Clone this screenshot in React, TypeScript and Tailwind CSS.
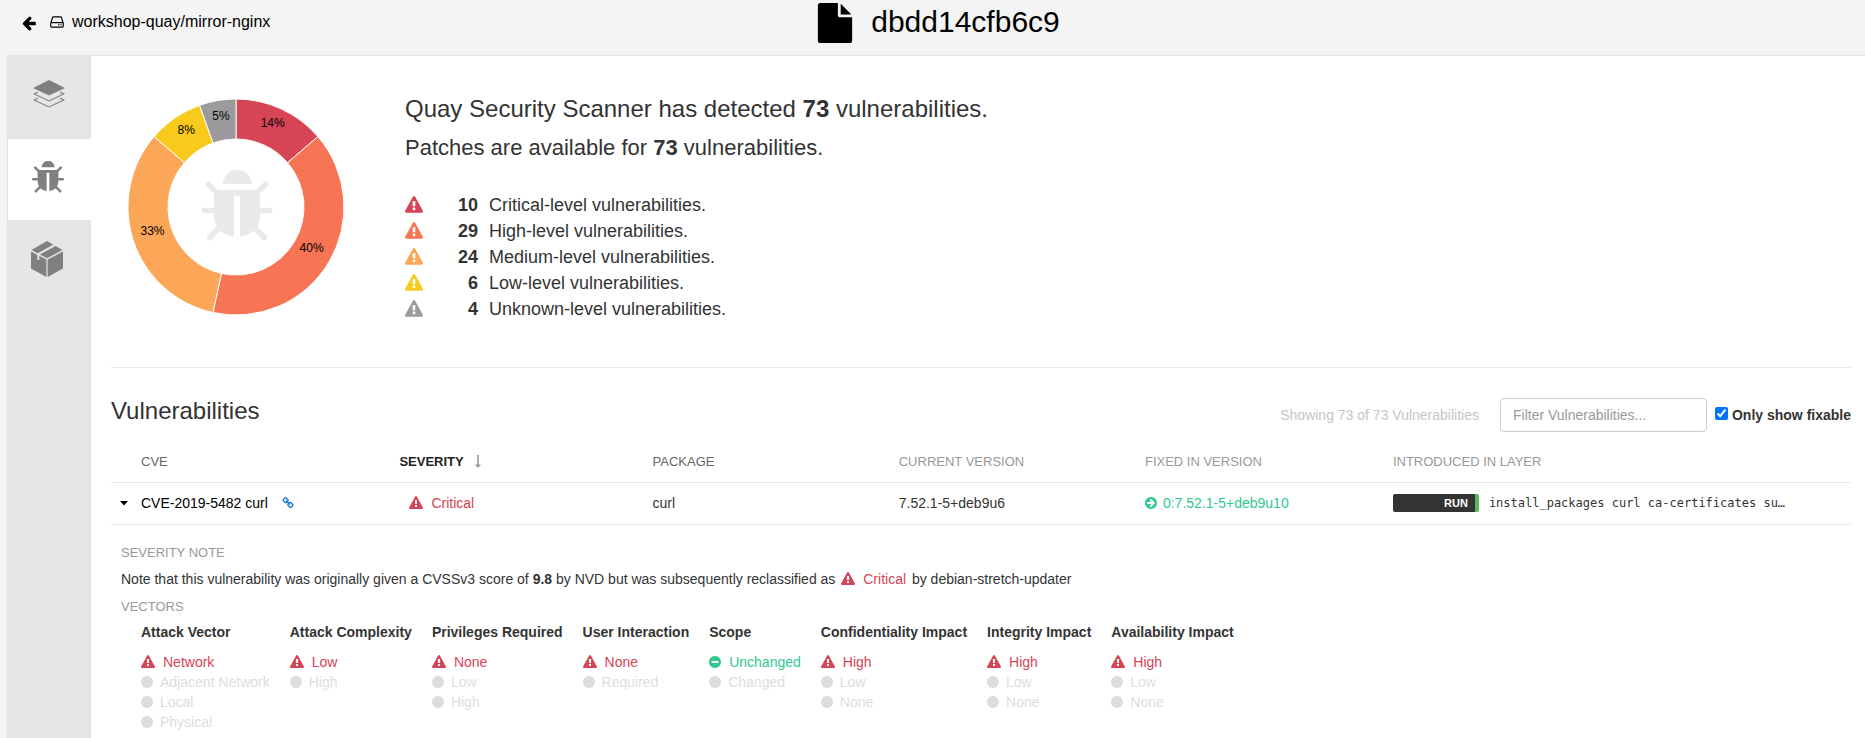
import { useId, useState, type ReactNode } from 'react';

const P = {
  warn: 'M1024 1375v-190q0-14-9.500-23.500t-22.500-9.500h-192q-13 0-22.500 9.500t-9.500 23.500v190q0 14 9.500 23.500t22.500 9.500h192q13 0 22.500-9.500t9.500-23.500zm-2-374l18-459q0-12-10-19-13-11-24-11h-220q-11 0-24 11-10 7-10 21l17 457q0 10 10 16.500t24 6.500h185q14 0 23.500-6.500t10.500-16.500zm-14-934l768 1408q35 63-2 126-17 29-46.500 46t-63.500 17h-1536q-34 0-63.500-17t-46.500-46q-37-63-2-126l768-1408q17-31 47-49t65-18 65 18 47 49z',
  disk: 'M1168 1216q0 33-23.500 56.500t-56.500 23.500-56.500-23.500-23.500-56.500 23.500-56.500 56.500-23.500 56.500 23.500 23.500 56.500zm256 0q0 33-23.500 56.500t-56.500 23.500-56.500-23.500-23.500-56.500 23.500-56.500 56.500-23.500 56.500 23.500 23.500 56.500zm112 160v-320q0-13-9.500-22.500t-22.500-9.500h-1216q-13 0-22.500 9.500t-9.500 22.500v320q0 13 9.500 22.500t22.500 9.500h1216q13 0 22.500-9.500t9.500-22.500zm-1230-480h1180l-157-482q-4-13-16-21.500t-26-8.500h-782q-14 0-26 8.500t-16 21.500zm1358 160v320q0 66-47 113t-113 47h-1216q-66 0-113-47t-47-113v-320q0-25 16-75l197-606q17-53 63-86t101-33h782q55 0 101 33t63 86l197 606q16 50 16 75z',
  back: 'M1664 896v128q0 53-32.500 90.500t-84.500 37.500h-704l293 294q38 36 38 90t-38 90l-75 76q-37 37-90 37-52 0-91-37l-651-652q-37-37-37-90 0-52 37-91l651-650q38-38 91-38 52 0 90 38l75 74q38 38 38 91t-38 91l-293 293h704q52 0 84.500 37.500t32.500 90.500z',
  file: 'M1152 512v-472q22 14 36 28l408 408q14 14 28 36h-472zm-128 32q0 40 28 68t68 28h544v1056q0 40-28 68t-68 28h-1344q-40 0-68-28t-28-68v-1600q0-40 28-68t68-28h800v544z',
  minus: 'M1344 960v-128q0-26-19-45t-45-19h-768q-26 0-45 19t-19 45v128q0 26 19 45t45 19h768q26 0 45-19t19-45zm320-64q0 209-103 385.500t-279.500 279.500-385.500 103-385.500-103-279.500-279.500-103-385.500 103-385.500 279.500-279.500 385.500-103 385.500 103 279.500 279.500 103 385.500z',
  next: 'M1413 896q0-27-18-45l-91-91-362-362q-18-18-45-18t-45 18l-91 91q-18 18-18 45t18 45l189 189h-502q-26 0-45 19t-19 45v128q0 26 19 45t45 19h502l-189 189q-19 19-19 45t19 45l91 91q18 18 45 18t45-18l362-362 91-91q18-18 18-45zm251 0q0 209-103 385.500t-279.500 279.500-385.500 103-385.500-103-279.500-279.500-103-385.500 103-385.500 279.500-279.500 385.500-103 385.500 103 279.500 279.500 103 385.500z',
  link: 'M1520 1216q0-40-28-68l-208-208q-28-28-68-28-42 0-72 32 3 3 19 18.500t21.500 21.500 15 19 13 25.500 3.500 27.500q0 40-28 68t-68 28q-15 0-27.500-3.500t-25.500-13-19-15-21.500-21.500-18.500-19q-33 31-33 73 0 40 28 68l206 207q27 27 68 27 40 0 68-26l147-146q28-28 28-67zm-703-705q0-40-28-68l-206-207q-28-28-68-28-39 0-68 27l-147 146q-28 28-28 67 0 40 28 68l208 208q27 27 68 27 42 0 72-31-3-3-19-18.500t-21.500-21.500-15-19-13-25.500-3.500-27.500q0-40 28-68t68-28q15 0 27.500 3.500t25.500 13 19 15 21.500 21.500 18.500 19q33-31 33-73zm895 705q0 120-85 203l-147 146q-83 83-203 83-121 0-204-85l-206-207q-83-83-83-203 0-123 88-209l-88-88q-86 88-208 88-120 0-204-84l-208-208q-84-84-84-204t85-203l147-146q83-83 203-83 121 0 204 85l206 207q83 83 83 203 0 123-88 209l88 88q86-88 208-88 120 0 204 84l208 208q84 84 84 204z',
  dot: 'M1664 896q0 209-103 385.500t-279.500 279.500-385.500 103-385.500-103-279.500-279.500-103-385.500 103-385.500 279.500-279.500 385.500-103 385.500 103 279.500 279.500 103 385.500z',
};

function Icon({ name, className, box = '0 0 1792 1792' }: { name: keyof typeof P; className: string; box?: string }) {
  return (
    <svg viewBox={box} className={`shrink-0 ${className}`} fill="currentColor" aria-hidden="true">
      <path d={P[name]} />
    </svg>
  );
}

function Bug() {
  return (
    <>
      <path d="M21.500 14a14.200 14.200 0 0 1 28.600 0z" />
      <path d="M12.500 20h46v25c0 12-8 20.500-20 21.300V26h-6v40.300c-12-.8-20-9.300-20-21.300z" />
      <path
        d="M7 14.500l8.500 8.500M64 14.500L55.500 23M2.800 40.500H13M68.200 40.500H58M8.300 67.500L18 57.500M62.700 67.500L53 57.500"
        fill="none"
        stroke="currentColor"
        strokeWidth="5.600"
        strokeLinecap="round"
      />
    </>
  );
}

const LEVELS = [
  { name: 'Critical', count: 10, fill: '#d64456', text: 'text-[#d64456]', share: '14%' },
  { name: 'High', count: 29, fill: '#f77454', text: 'text-[#f77454]', share: '40%' },
  { name: 'Medium', count: 24, fill: '#fca657', text: 'text-[#fca657]', share: '33%' },
  { name: 'Low', count: 6, fill: '#f8ca1c', text: 'text-[#f8ca1c]', share: '8%' },
  { name: 'Unknown', count: 4, fill: '#9b9b9b', text: 'text-[#9b9b9b]', share: '5%' },
];
const TOTAL = 73;

function Donut() {
  const R = 108;
  const r = 68;
  let seen = 0;
  const at = (turn: number, radius: number) =>
    `${(110 + radius * Math.sin(turn * 2 * Math.PI)).toFixed(2)} ${(110 - radius * Math.cos(turn * 2 * Math.PI)).toFixed(2)}`;
  return (
    <svg viewBox="0 0 220 220" className="mt-px size-[220px] shrink-0" role="img" aria-label="Vulnerabilities by severity">
      {LEVELS.map((l) => {
        const a = seen / TOTAL;
        seen += l.count;
        const b = seen / TOTAL;
        const [x, y] = at((a + b) / 2, (R + r) / 2).split(' ');
        return (
          <g key={l.name}>
            <path
              d={`M${at(a, R)}A${R} ${R} 0 0 1 ${at(b, R)}L${at(b, r)}A${r} ${r} 0 0 0 ${at(a, r)}Z`}
              fill={l.fill}
              stroke="#fff"
            />
            <text x={x} y={y} textAnchor="middle" fontSize="12" fill="#000">
              {l.share}
            </text>
          </g>
        );
      })}
      <g transform="translate(75.500 73)" className="text-[#e9e9e9]" fill="currentColor">
        <Bug />
      </g>
    </svg>
  );
}

function LayersIcon() {
  return (
    <svg viewBox="0 0 32 28" className="h-7 w-8" fill="none" stroke="#808080" aria-hidden="true">
      <path d="M16 0L32 8 16 15.600 0 8z" fill="#808080" stroke="none" />
      <path d="M5 12L1.200 14 16 21 30.800 14 27 12M5 18L1.200 20 16 27 30.800 20 27 18" strokeWidth="1.100" />
    </svg>
  );
}

function PackageIcon() {
  return (
    <svg viewBox="0 0 32 36" className="h-9 w-8" fill="#808080" aria-hidden="true">
      <path d="M0 10.500L15.400 18.500V36L0 27.500zM32 10.500L16.600 18.500V36L32 27.500z" />
      <path d="M16 0L31.500 9 16 17.300 0.500 9z" />
      <path d="M24 4L7.300 13V19" fill="none" stroke="#e6e6e6" strokeWidth="2" />
    </svg>
  );
}

function SideTab({ label, active, wide, children }: { label: string; active?: boolean; wide?: boolean; children: ReactNode }) {
  return (
    <button
      type="button"
      role="tab"
      aria-selected={!!active}
      aria-label={label}
      className={`flex w-full items-center justify-center pb-[6px] ${wide ? 'pr-0' : 'pr-1'} ${
        active
          ? 'h-[83px] border-y border-l border-[#dbe5ee] bg-white'
          : 'h-[82px] border-r border-[#dbe5ee] bg-[#e6e6e6]'
      }`}
    >
      {children}
    </button>
  );
}

const VECTORS = [
  { name: 'Attack Vector', on: 'Network', off: ['Adjacent Network', 'Local', 'Physical'] },
  { name: 'Attack Complexity', on: 'Low', off: ['High'] },
  { name: 'Privileges Required', on: 'None', off: ['Low', 'High'] },
  { name: 'User Interaction', on: 'None', off: ['Required'] },
  { name: 'Scope', on: 'Unchanged', off: ['Changed'], good: true },
  { name: 'Confidentiality Impact', on: 'High', off: ['Low', 'None'] },
  { name: 'Integrity Impact', on: 'High', off: ['Low', 'None'] },
  { name: 'Availability Impact', on: 'High', off: ['Low', 'None'] },
];

export default function App() {
  const id = useId();
  const [filter, setFilter] = useState('');
  const [fixable, setFixable] = useState(true);
  return (
    <div className="flex min-h-screen flex-col bg-[#f4f4f4] font-['Liberation_Sans',Arial,sans-serif] text-sm text-[#333]">
      <header className="grid h-[55px] grid-cols-[1fr_auto_1fr] items-start text-black">
        <a href="#repo" className="flex items-center pt-[10px] pl-[21px] text-base leading-6">
          <Icon name="back" className="mt-0.5 mr-3 size-4" />
          <Icon name="disk" className="mr-[7px] size-4" />
          workshop-quay/mirror-nginx
        </a>
        <h1 className="ml-[10px] flex items-center gap-4 text-[30px] leading-[44px]">
          <Icon name="file" className="mt-0.5 size-10" />
          dbdd14cfb6c9
        </h1>
      </header>

      <div className="ml-[7px] flex grow border-t border-[#e2e2e2] bg-white">
        <nav role="tablist" aria-label="Views" className="flex w-[84px] shrink-0 flex-col bg-[#e6e6e6]">
          <SideTab label="Layers" wide>
            <LayersIcon />
          </SideTab>
          <SideTab label="Security scan" active>
            <svg viewBox="0 0 71 71" className="size-8 text-[#808080]" fill="currentColor" aria-hidden="true">
              <Bug />
            </svg>
          </SideTab>
          <SideTab label="Packages">
            <PackageIcon />
          </SideTab>
          <div className="grow border-r border-[#dbe5ee]" />
        </nav>

        <main className="min-w-0 grow pr-[14px] pl-5">
          <section className="flex border-b border-[#ebebeb] pt-10 pb-[45px] pl-[15px]">
            <Donut />
            <div className="ml-[59px]">
              <h2 className="text-2xl leading-[26px]">
                Quay Security Scanner has detected <b>73</b> vulnerabilities.
              </h2>
              <h3 className="mt-[13px] text-[22px] leading-[26px]">
                Patches are available for <b>73</b> vulnerabilities.
              </h3>
              <ul className="mt-[31px] text-lg leading-[26px]">
                {LEVELS.map((l) => (
                  <li key={l.name} className="flex items-center">
                    <Icon name="warn" className={`size-[18px] ${l.text}`} />
                    <b className="mr-[11px] w-[55px] text-right">{l.count}</b>
                    {l.name}-level vulnerabilities.
                  </li>
                ))}
              </ul>
            </div>
          </section>

          <section>
            <div className="mt-[30px] flex items-center">
              <h2 className="mr-auto pb-2 text-2xl leading-[26px]">Vulnerabilities</h2>
              <span className="mr-[21px] text-[#c6c6c6]">Showing 73 of 73 Vulnerabilities</span>
              <input
                type="text"
                aria-label="Filter vulnerabilities"
                placeholder="Filter Vulnerabilities..."
                value={filter}
                onChange={(e) => setFilter(e.target.value)}
                className="h-[34px] w-[207px] rounded border border-[#ccc] bg-white px-3 placeholder:text-[#999]"
              />
              <input
                id={id}
                type="checkbox"
                checked={fixable}
                onChange={(e) => setFixable(e.target.checked)}
                className="mr-1 mb-[3px] ml-2 size-[13px]"
              />
              <label htmlFor={id} className="font-bold">
                Only show fixable
              </label>
            </div>

            <table className="mt-2 w-full table-fixed border-collapse text-left">
              <colgroup>
                <col className="w-[30px]" />
                <col className="w-[14.85%]" />
                <col className="w-[14.55%]" />
                <col className="w-[14.15%]" />
                <col className="w-[14.15%]" />
                <col className="w-[14.25%]" />
                <col />
              </colgroup>
              <thead>
                <tr className="h-[42px] border-b border-[#e8e8e8] text-[13px] whitespace-nowrap text-[#999] *:pt-1">
                  <td />
                  <th scope="col" className="font-normal text-[#666]">CVE</th>
                  <th scope="col" aria-sort="descending" className="font-bold text-[#222]">
                    SEVERITY
                    <svg viewBox="0 0 6 13" className="ml-[11px] inline-block h-[13px] w-[6px] align-[-2px]" fill="#999" aria-hidden="true">
                      <path d="M2.200 0H3.800V9.500H6L3 13 0 9.500H2.200z" />
                    </svg>
                  </th>
                  <th scope="col" className="font-normal text-[#666]">PACKAGE</th>
                  <th scope="col" className="font-normal">CURRENT VERSION</th>
                  <th scope="col" className="font-normal">FIXED IN VERSION</th>
                  <th scope="col" className="font-normal">INTRODUCED IN LAYER</th>
                </tr>
              </thead>
              <tbody>
                <tr className="h-[42px] border-b border-[#e8e8e8] whitespace-nowrap">
                  <td className="pl-[9px]">
                    <button type="button" aria-label="Collapse details" aria-expanded="true" className="flex h-5 items-center">
                      <svg viewBox="0 0 8 5" className="h-[5px] w-2" aria-hidden="true">
                        <path d="M0 0h8L4 4.500z" />
                      </svg>
                    </button>
                  </td>
                  <td>
                    <span className="flex items-center gap-[14px] text-black">
                      CVE-2019-5482 curl
                      <a href="#cve" aria-label="Open advisory" className="text-[#1170cc]">
                        <Icon name="link" className="size-3" />
                      </a>
                    </span>
                  </td>
                  <td>
                    <span className="flex items-center gap-2 pl-[10px] text-[#d64456]">
                      <Icon name="warn" className="size-[14px]" />
                      Critical
                    </span>
                  </td>
                  <td>curl</td>
                  <td>7.52.1-5+deb9u6</td>
                  <td>
                    <span className="flex items-center gap-[6px] text-[#2fc98e]">
                      <Icon name="next" className="h-[14px] w-3" box="128 0 1536 1792" />
                      0:7.52.1-5+deb9u10
                    </span>
                  </td>
                  <td>
                    <span className="flex items-center gap-[10px]">
                      <span className="w-[86px] rounded-[2px] border-r-4 border-[#5cb85c] bg-[#333] pr-[7px] text-right text-[11px] leading-[18px] font-bold text-white">
                        RUN
                      </span>
                      <code className="font-['DejaVu_Sans_Mono',monospace] text-xs">
                        install_packages curl ca-certificates su…
                      </code>
                    </span>
                  </td>
                </tr>
              </tbody>
            </table>

            <div className="pt-[18px] pl-[10px]">
              <h4 className="text-[13px] leading-5 text-[#999]">SEVERITY NOTE</h4>
              <p className="mt-[6px] leading-5">
                Note that this vulnerability was originally given a CVSSv3 score of <b>9.8</b> by NVD but was subsequently
                reclassified as{' '}
                <span className="mx-[2px] text-[#d64456]">
                  <Icon name="warn" className="mr-2 inline-block size-[14px] align-[-2px]" />
                  Critical
                </span>{' '}
                by debian-stretch-updater
              </p>
              <h4 className="mt-2 text-[13px] leading-5 text-[#999]">VECTORS</h4>
              <div className="mt-[5px] flex gap-5 pl-5 leading-5 whitespace-nowrap">
                {VECTORS.map((v) => (
                  <div key={v.name}>
                    <h5 className="font-bold">{v.name}</h5>
                    <ul className="mt-[10px] text-[#ddd]">
                      <li className={v.good ? 'flex items-center gap-2 text-[#2fc98e]' : 'flex items-center gap-2 text-[#d64456]'}>
                        {v.good ? (
                          <Icon name="minus" className="h-[14px] w-3" box="128 0 1536 1792" />
                        ) : (
                          <Icon name="warn" className="size-[14px]" />
                        )}
                        {v.on}
                      </li>
                      {v.off.map((o) => (
                        <li key={o} className="flex items-center gap-[7px]">
                          <Icon name="dot" className="h-[14px] w-3" box="128 0 1536 1792" />
                          {o}
                        </li>
                      ))}
                    </ul>
                  </div>
                ))}
              </div>
            </div>
          </section>
        </main>
      </div>
    </div>
  );
}
